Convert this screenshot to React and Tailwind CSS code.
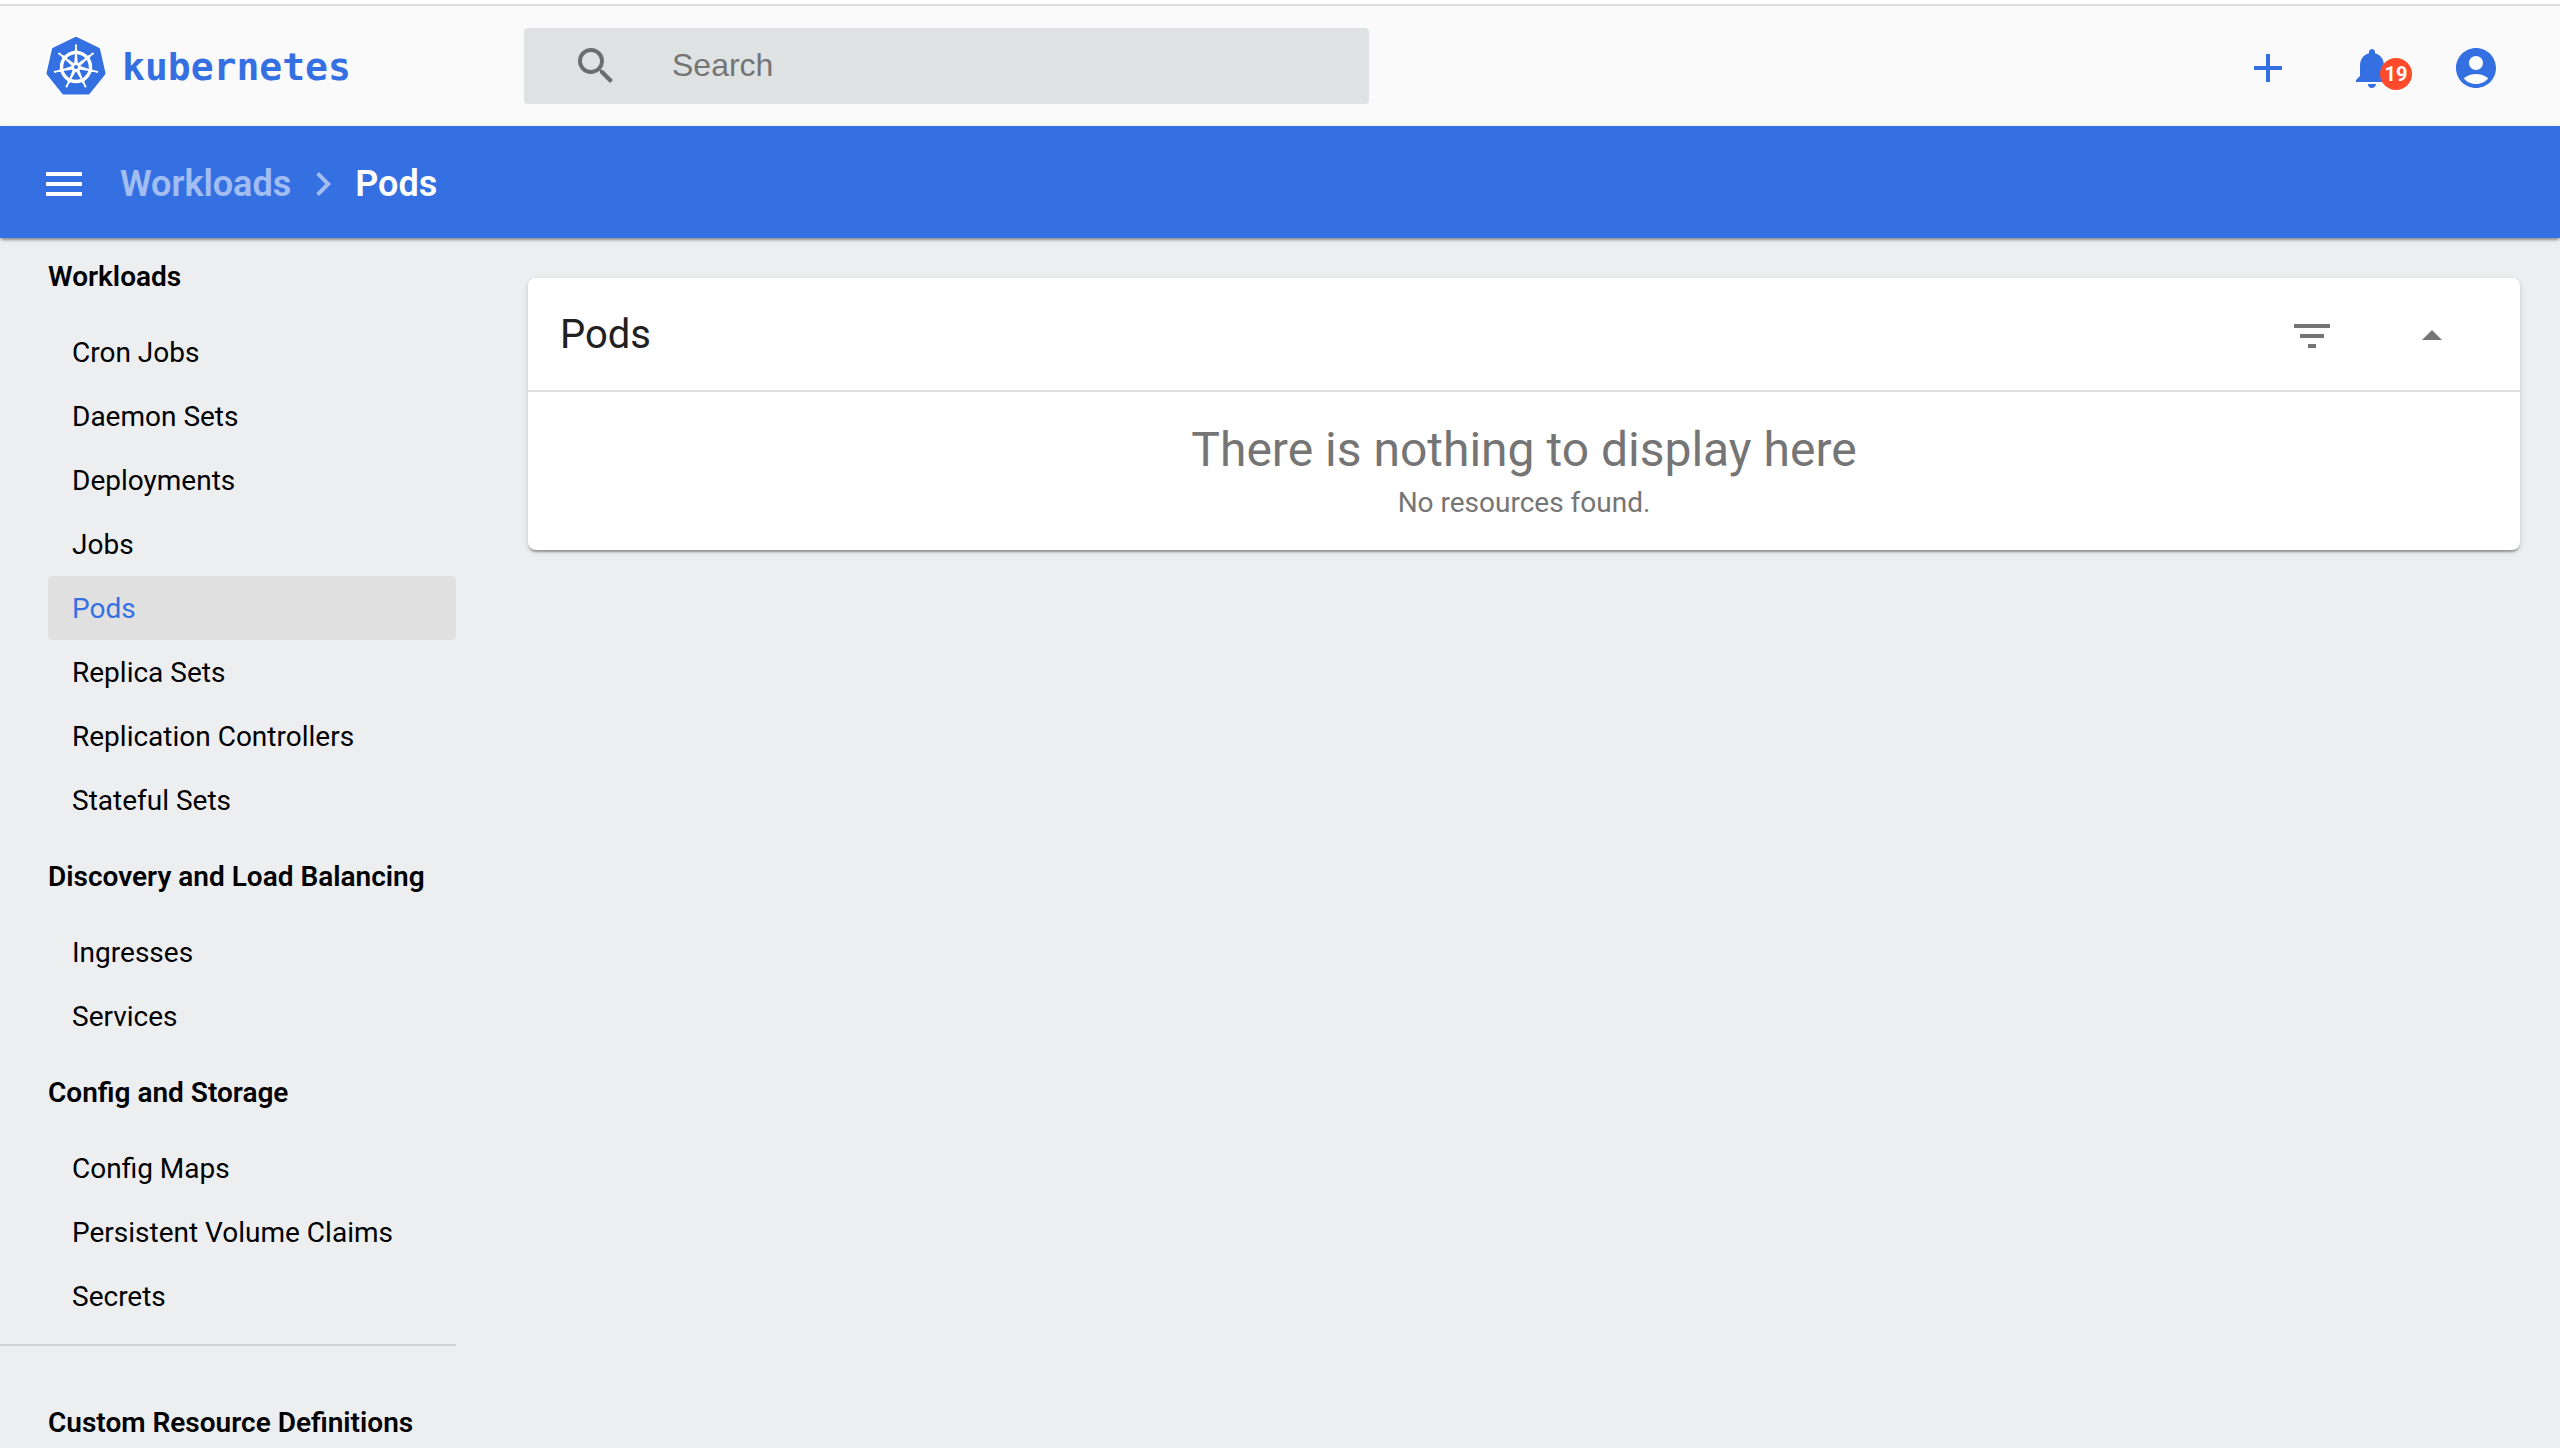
import React from "react";
import {
  MdAdd,
  MdNotifications,
  MdAccountCircle,
  MdSearch,
  MdMenu,
  MdChevronRight,
  MdFilterList,
  MdArrowDropUp,
} from "react-icons/md";

const GROUPS = [
  {
    title: "Workloads",
    items: [
      "Cron Jobs",
      "Daemon Sets",
      "Deployments",
      "Jobs",
      "Pods",
      "Replica Sets",
      "Replication Controllers",
      "Stateful Sets",
    ],
  },
  { title: "Discovery and Load Balancing", items: ["Ingresses", "Services"] },
  {
    title: "Config and Storage",
    items: ["Config Maps", "Persistent Volume Claims", "Secrets"],
  },
];

const SPOKES = [0, 1, 2, 3, 4, 5, 6].map((i) => (i * 360) / 7);

const HEPTAGON = SPOKES.map((deg) => {
  const a = ((deg - 90) * Math.PI) / 180;
  return `${(28.5 * Math.cos(a)).toFixed(2)},${(28.5 * Math.sin(a)).toFixed(2)}`;
}).join(" ");

function Logo() {
  return (
    <svg viewBox="-32 -32 64 62" className="h-[62px] w-16 shrink-0" aria-hidden="true">
      <polygon points={HEPTAGON} fill="#fff" stroke="#fff" strokeWidth="7" strokeLinejoin="round" />
      <polygon points={HEPTAGON} fill="#3570e3" stroke="#3570e3" strokeWidth="3.5" strokeLinejoin="round" />
      <circle r="14.5" fill="none" stroke="#fff" strokeWidth="3.4" />
      {SPOKES.map((deg) => (
        <g key={deg} transform={`rotate(${deg})`}>
          <path d="M-1.9-3L-.9-14H.9L1.9-3z" fill="#fff" />
          <path d="M-1.6-15.5L-.8-19-1.1-22Q0-23.6 1.1-22L.8-19 1.6-15.5z" fill="#fff" />
        </g>
      ))}
      <circle r="4.6" fill="#fff" />
      <circle r="2" fill="#3570e3" />
    </svg>
  );
}

function IconButton({ label, children }) {
  return (
    <button type="button" aria-label={label} className="flex size-20 items-center justify-center rounded-full">
      {children}
    </button>
  );
}

function Header() {
  return (
    <header className="flex h-[126px] shrink-0 items-center border-t-4 border-white bg-[#fafafa]">
      <div className="flex h-full w-full items-center border-t-2 border-[#dcdce0]">
        <a href="#overview" className="flex w-[524px] shrink-0 items-center gap-3.5 pl-11 text-[#3570e3]">
          <Logo />
          <span className="pt-0.5 font-['DejaVu_Sans_Mono',monospace] text-[38px] leading-[56px] font-bold">
            kubernetes
          </span>
        </a>
        <form role="search" className="flex h-[76px] w-[33%] items-center rounded bg-[#dee2e3] pl-12">
          <button type="button" aria-label="Run search" className="text-[#6b6d6e]">
            <MdSearch className="size-12" />
          </button>
          <input
            type="text"
            aria-label="Search"
            placeholder="Search"
            className="ml-[52px] min-w-0 flex-1 bg-transparent pb-0.5 font-['Liberation_Sans',Arial,sans-serif] text-[32px] leading-10 outline-none placeholder:text-[#757575]"
          />
        </form>
        <div className="ml-auto flex items-center gap-6 pt-1 pr-11 text-[#3570e3]">
          <IconButton label="Create new resource">
            <MdAdd className="size-12" />
          </IconButton>
          <IconButton label="Notifications, 19 unread">
            <span className="relative">
              <MdNotifications className="size-12" />
              <span className="absolute top-3.5 left-8 flex size-8 items-center justify-center rounded-full bg-[#ff4b2b] text-[20px] leading-8 font-bold text-white">
                19
              </span>
            </span>
          </IconButton>
          <IconButton label="Account">
            <MdAccountCircle className="size-12" />
          </IconButton>
        </div>
      </div>
    </header>
  );
}

function ActionBar() {
  return (
    <div className="z-10 flex h-28 shrink-0 items-center bg-[#3570e3] pt-1 pl-10 text-white shadow-[0_4px_2px_-2px_rgba(0,0,0,0.2),0_2px_2px_rgba(0,0,0,0.14),0_2px_6px_rgba(0,0,0,0.12)]">
      <button type="button" aria-label="Toggle navigation">
        <MdMenu className="size-12" />
      </button>
      <nav aria-label="Breadcrumb" className="ml-8 flex items-center text-[36px] leading-[48px] font-semibold">
        <a href="#workloads" className="text-white/54">
          Workloads
        </a>
        <MdChevronRight className="mx-2 size-12 text-white/54" />
        <span aria-current="page">Pods</span>
      </nav>
    </div>
  );
}

function GroupTitle({ children }) {
  return <h2 className="pt-[29px] pb-[27px] pl-12 leading-8 font-semibold">{children}</h2>;
}

function Sidebar() {
  return (
    <nav
      aria-label="Resources"
      className="w-[456px] shrink-0 overflow-y-auto text-[28px] text-black [scrollbar-width:none]"
    >
      {GROUPS.map((group) => (
        <section key={group.title} className="first:-mt-1.5">
          <GroupTitle>{group.title}</GroupTitle>
          <ul className="pl-12">
            {group.items.map((item) => (
              <li key={item}>
                <a
                  href={"#" + item.toLowerCase().replace(/ /g, "")}
                  aria-current={item === "Pods" ? "page" : undefined}
                  className={
                    item === "Pods"
                      ? "block rounded bg-[#e0e0e0] pt-0.5 pl-6 leading-[62px] text-[#3570e3]"
                      : "block rounded pt-0.5 pl-6 leading-[62px]"
                  }
                >
                  {item}
                </a>
              </li>
            ))}
          </ul>
        </section>
      ))}
      <hr className="mt-4 mb-8 border-t-2 border-[#d1d2d4]" />
      <GroupTitle>Custom Resource Definitions</GroupTitle>
    </nav>
  );
}

function PodsCard() {
  return (
    <section className="rounded-lg bg-white shadow-[0_4px_2px_-2px_rgba(0,0,0,0.2),0_2px_2px_rgba(0,0,0,0.14),0_2px_6px_rgba(0,0,0,0.12)]">
      <div className="flex h-[114px] items-center border-b-2 border-[#e0e0e0] pr-12 pl-8">
        <h1 className="pt-0.5 text-[40px] leading-[48px] text-[#212121]">Pods</h1>
        <div className="ml-auto flex gap-10 pt-1 text-[#757575]">
          <IconButton label="Filter">
            <MdFilterList className="size-12" />
          </IconButton>
          <IconButton label="Collapse card">
            <MdArrowDropUp className="size-12" />
          </IconButton>
        </div>
      </div>
      <div className="pt-[26px] pb-[26px] text-center text-[#757575]">
        <p className="text-[48px] leading-[64px]">There is nothing to display here</p>
        <p className="text-[28px] leading-[42px]">No resources found.</p>
      </div>
    </section>
  );
}

export default function App() {
  return (
    <div className="flex h-screen flex-col overflow-hidden bg-[#edeef0] font-[Roboto,sans-serif]">
      <Header />
      <ActionBar />
      <div className="flex min-h-0 flex-1">
        <Sidebar />
        <main className="min-w-0 flex-1 pt-10 pr-10 pl-[72px]">
          <PodsCard />
        </main>
      </div>
    </div>
  );
}
